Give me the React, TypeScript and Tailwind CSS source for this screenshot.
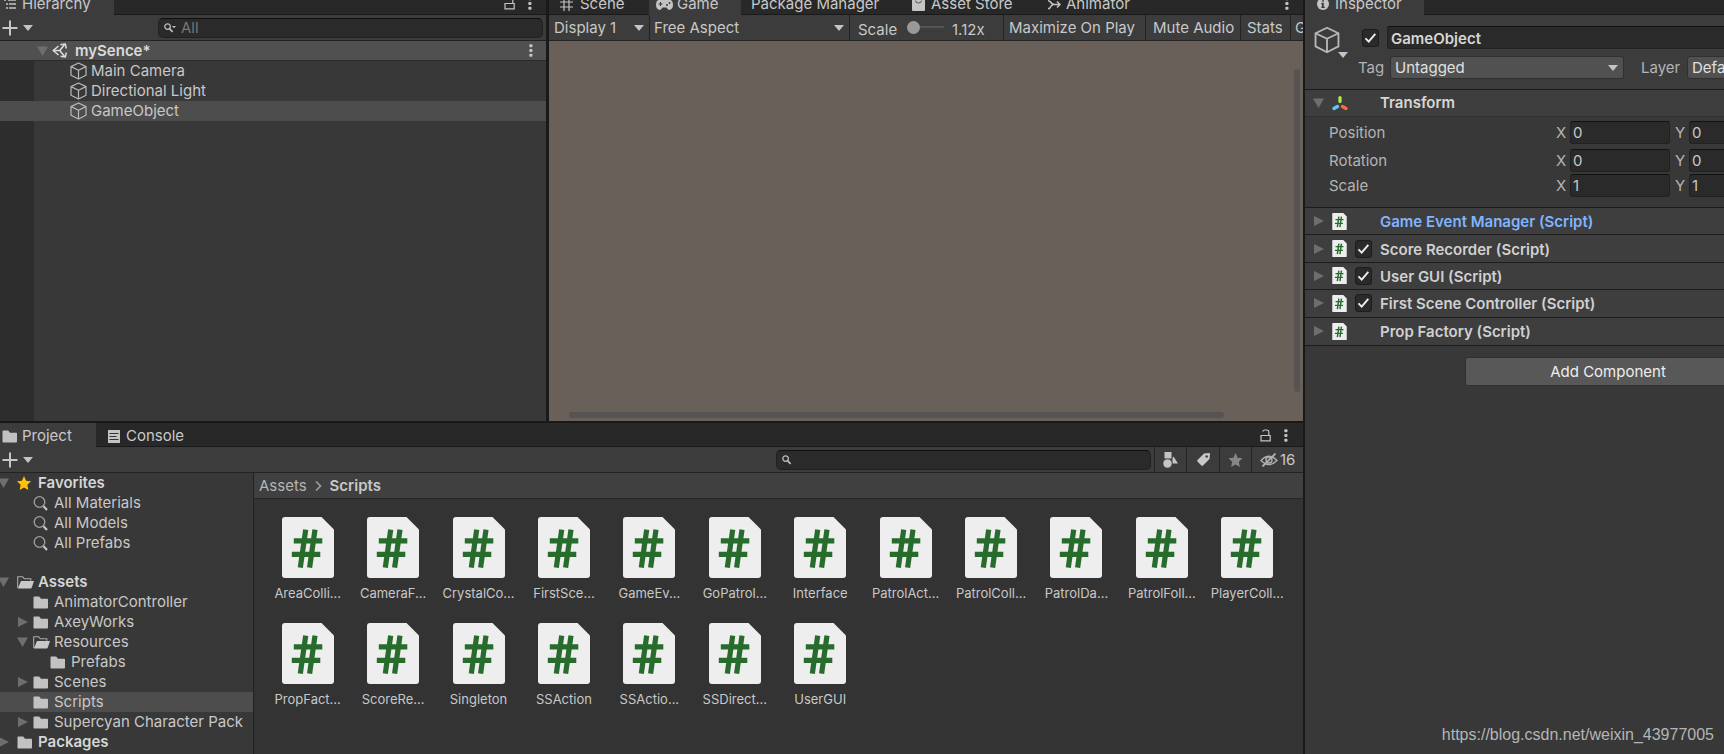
import type { ReactNode } from 'react';

const sceneObjects = [
  { name: 'Main Camera', selected: false },
  { name: 'Directional Light', selected: false },
  { name: 'GameObject', selected: true },
];

const favorites = ['All Materials', 'All Models', 'All Prefabs'];

type Fold = 'open' | 'closed' | 'none';

const folders: { name: string; fold: Fold; depth: number; selected?: boolean }[] = [
  { name: 'Assets', fold: 'open', depth: 0 },
  { name: 'AnimatorController', fold: 'none', depth: 1 },
  { name: 'AxeyWorks', fold: 'closed', depth: 1 },
  { name: 'Resources', fold: 'open', depth: 1 },
  { name: 'Prefabs', fold: 'none', depth: 2 },
  { name: 'Scenes', fold: 'closed', depth: 1 },
  { name: 'Scripts', fold: 'none', depth: 1, selected: true },
  { name: 'Supercyan Character Pack', fold: 'closed', depth: 1 },
  { name: 'Packages', fold: 'closed', depth: 0 },
];

const depthPadding = ['pl-0', 'pl-[17px]', 'pl-[34px]'];

const scripts = [
  'AreaColli...', 'CameraF...', 'CrystalCo...', 'FirstSce...', 'GameEv...', 'GoPatrol...',
  'Interface', 'PatrolAct...', 'PatrolColl...', 'PatrolDa...', 'PatrolFoll...', 'PlayerColl...',
  'PropFact...', 'ScoreRe...', 'Singleton', 'SSAction', 'SSActio...', 'SSDirect...', 'UserGUI',
];

const components = [
  { name: 'Game Event Manager (Script)', toggle: false, highlight: true },
  { name: 'Score Recorder (Script)', toggle: true },
  { name: 'User GUI (Script)', toggle: true },
  { name: 'First Scene Controller (Script)', toggle: true },
  { name: 'Prop Factory (Script)', toggle: false },
];

/* ---------- icons ---------- */

function Caret() {
  return (
    <svg className="h-[6px] w-[10px] shrink-0" viewBox="0 0 10 6" fill="#c4c4c4">
      <path d="M0 0h10L5 6z" />
    </svg>
  );
}

function FoldArrow({ fold }: { fold: Fold }) {
  return (
    <svg className="h-[10px] w-[11px] shrink-0" viewBox="0 0 11 10" fill="#6e6e6e">
      {fold === 'open' && <path d="M0 0.5h11L5.5 10z" />}
      {fold === 'closed' && <path d="M1 0l10 5-10 5z" />}
    </svg>
  );
}

function Plus() {
  return (
    <svg className="h-4 w-4 shrink-0" viewBox="0 0 16 16" stroke="#c8c8c8" strokeWidth="2">
      <path d="M8 0.5v15M0.5 8h15" />
    </svg>
  );
}

function Dots() {
  return (
    <svg className="h-[13px] w-[4px] shrink-0" viewBox="0 0 4 13" fill="#c4c4c4">
      <rect x="0.3" y="0.2" width="3.2" height="3" rx="1" />
      <rect x="0.3" y="5" width="3.2" height="3" rx="1" />
      <rect x="0.3" y="9.8" width="3.2" height="3" rx="1" />
    </svg>
  );
}

function Lock() {
  return (
    <svg className="h-[13px] w-[11px] shrink-0" viewBox="0 0 11 13" fill="none" stroke="#c4c4c4" strokeWidth="1.2">
      <path d="M1 6.5h9.2v5.4H1z" />
      <path d="M8.8 6.5V3.2Q8.8 1 6.5 1H5Q3 1 2.8 2.6" />
    </svg>
  );
}

function Cube({ className }: { className: string }) {
  return (
    <svg className={className} viewBox="0 0 17 18" fill="none" stroke="#b9b9b9" strokeWidth="1.2" strokeLinejoin="round">
      <path d="M8.5 1L16 4.6v8.6L8.5 17 1 13.2V4.6z" />
      <path d="M1 4.6l7.5 3.6L16 4.6M8.5 8.2V17" />
    </svg>
  );
}

function UnityLogo() {
  return (
    <svg className="h-[15px] w-[15px] shrink-0" viewBox="0 0 15 15" fill="none" stroke="#dcdcdc" strokeWidth="1.5" strokeLinejoin="round">
      <path d="M6.500 3L1.200 7.500l5.300 4.500" />
      <path d="M8.500 1.800l4.800-.9 1 4.600M14.300 9.500l-1 4.600-4.800-.9" />
      <path d="M1.200 7.500h6.600l4.600-5.800M7.800 7.500l4.600 5.800" />
    </svg>
  );
}

function Folder() {
  return (
    <svg className="h-[13px] w-[16px] shrink-0" viewBox="0 0 16 13" fill="#c2c2c2">
      <path d="M1 0.5h5.2L8 2.8h6.2q.8 0 .8.8v8q0 .9-.9.9H1.4q-.9 0-.9-.9V1.2z" />
    </svg>
  );
}

function FolderOpen() {
  return (
    <svg className="h-[13px] w-[17px] shrink-0" viewBox="0 0 17 13">
      <path d="M.7 12V.8h5l1.6 2h6.5v2" fill="none" stroke="#a9a9a9" strokeWidth="1.1" />
      <path d="M4 5h13l-2.2 6.6q-.3.9-1.2.9H.8z" fill="#c8c8c8" />
    </svg>
  );
}

function Search() {
  return (
    <svg className="h-[15px] w-[15px] shrink-0" viewBox="0 0 15 15" fill="none">
      <circle cx="6.5" cy="6" r="5.3" stroke="#a0a0a0" strokeWidth="1.3" />
      <path d="M10.5 10.2l3.5 3.8" stroke="#c4c4c4" strokeWidth="2.2" />
    </svg>
  );
}

function SearchSmall({ menu = false }: { menu?: boolean }) {
  return (
    <svg className="h-[10px] w-[12px] shrink-0" viewBox="0 0 12 10" fill="none" stroke="#bdbdbd">
      <circle cx="3.6" cy="3.6" r="2.8" strokeWidth="1.3" />
      <path d="M5.6 5.6l3 3.4" strokeWidth="1.7" />
      {menu && <path d="M8 3h4l-2 2.2z" fill="#bdbdbd" stroke="none" />}
    </svg>
  );
}

function ScriptFile({ className }: { className: string }) {
  return (
    <svg className={className} viewBox="0 0 52 61">
      <path d="M3 0h36.5L52 12.5V58q0 3-3 3H3q-3 0-3-3V3q0-3 3-3z" fill="#eeeeee" />
      <path d="M23.7 12.7l-5.4 38M33 12.7l-5.4 38M11.8 23.8h28.5M9.8 37.3h28.5" stroke="#276c2c" strokeWidth="5.2" />
    </svg>
  );
}

function Check() {
  return (
    <svg className="pointer-events-none h-[18px] w-[17px] [grid-area:1/1]" viewBox="0 0 17 18" fill="none" stroke="#eeeeee" strokeWidth="1.9">
      <path d="M3.5 9.4l3.2 3.3 6.6-7.8" />
    </svg>
  );
}

/* ---------- controls ---------- */

function Toggle({ label }: { label: string }) {
  return (
    <label className="grid shrink-0">
      <input
        type="checkbox"
        defaultChecked
        aria-label={label}
        className="h-[18px] w-[17px] appearance-none rounded-[3px] border border-[#1c1c1c] bg-[#2a2a2a] [grid-area:1/1]"
      />
      <Check />
    </label>
  );
}

function Tab({ icon, label, active = false, className }: { icon?: ReactNode; label: string; active?: boolean; className: string }) {
  return (
    <button
      className={`flex h-6 shrink-0 items-center pt-[2px] text-left ${active ? 'bg-[#3c3c3c]' : ''} ${className}`}
    >
      {icon}
      {label}
    </button>
  );
}

function AxisField({ axis, row, value }: { axis: string; row: string; value: string }) {
  return (
    <label className="flex shrink-0 items-center">
      <span className="w-[14px] text-[#b4b4b4]">{axis}</span>
      <input
        aria-label={`${row} ${axis}`}
        defaultValue={value}
        className="h-[23px] w-[100px] rounded-[3px] border border-[#212121] border-t-[#111111] bg-[#2a2a2a] px-[2px]"
      />
    </label>
  );
}

function TransformRow({ name, value }: { name: string; value: string }) {
  return (
    <div className="flex items-center">
      <span className="w-[227px] shrink-0 text-[#b4b4b4]">{name}</span>
      <div className="flex gap-[5px]">
        <AxisField axis="X" row={name} value={value} />
        <AxisField axis="Y" row={name} value={value} />
      </div>
    </div>
  );
}

/* ---------- panels ---------- */

function HierarchyPanel() {
  return (
    <section className="flex w-[546px] shrink-0 flex-col bg-[#383838]">
      <div className="flex h-[15px] items-end justify-between overflow-hidden bg-[#282828] shadow-[inset_0_-1px_0_#1a1a1a]">
        <Tab
          active
          className="w-[114px] gap-[6px] pl-1"
          label="Hierarchy"
          icon={
            <svg className="h-[12px] w-[12px]" viewBox="0 0 12 12" stroke="#c4c4c4" strokeWidth="1.3">
              <path d="M0 2h2M4 2h8M2 6h2M5 6h7M2 10h2M5 10h7" />
            </svg>
          }
        />
        <div className="flex h-6 items-center gap-[13px] pr-[14px]">
          <Lock />
          <Dots />
        </div>
      </div>
      <div className="flex h-[26px] items-center border-b border-[#222222] bg-[#3c3c3c] pr-[3px] pl-[2px]">
        <button className="flex items-center gap-[5px]" aria-label="Create">
          <Plus />
          <Caret />
        </button>
        <label className="ml-auto flex h-5 w-[385px] items-center gap-[5px] rounded-[5px] border border-[#212121] border-t-[#0f0f0f] bg-[#2a2a2a] px-[5px]">
          <SearchSmall menu />
          <input placeholder="All" aria-label="Search hierarchy" className="min-w-0 flex-1 outline-none placeholder:text-[#767676]" />
        </label>
      </div>
      <div className="flex h-5 items-center border-b border-[#2b2b2b] bg-[#505050] pr-[13px] pl-[37px]">
        <FoldArrow fold="open" />
        <span className="mr-2 ml-1">
          <UnityLogo />
        </span>
        <span className="font-semibold text-[#dadada]">mySence*</span>
        <span className="ml-auto">
          <Dots />
        </span>
      </div>
      <ul className="flex-1 bg-linear-to-r from-[#2d2d2d] from-[34px] to-[#383838] to-[34px]">
        {sceneObjects.map((object) => (
          <li key={object.name} className={`flex h-5 items-center gap-1 pl-[70px] ${object.selected ? 'bg-[#4d4d4d]' : ''}`}>
            <Cube className="h-[18px] w-[17px] shrink-0" />
            {object.name}
          </li>
        ))}
      </ul>
    </section>
  );
}

function GamePanel() {
  return (
    <section className="flex min-w-0 flex-1 flex-col">
      <div className="flex h-[15px] items-end overflow-hidden bg-[#282828] shadow-[inset_0_-1px_0_#1a1a1a]">
        <Tab
          className="w-[100px] gap-[7px] pl-[11px]"
          label="Scene"
          icon={
            <svg className="h-[13px] w-[13px]" viewBox="0 0 13 13" stroke="#c4c4c4" strokeWidth="1.2">
              <path d="M4 0v13M9 0v13M0 4h13M0 9h13" />
            </svg>
          }
        />
        <Tab
          active
          className="w-[92px] gap-1 pl-[7px]"
          label="Game"
          icon={
            <svg className="h-[11px] w-[17px]" viewBox="0 0 17 11">
              <path d="M4.5 0h8Q17 1 17 5.5T13.5 11q-1.5 0-3-2.5h-4Q5 11 3.5 11 0 10 0 5.500T4.500 0z" fill="#c4c4c4" />
              <path d="M2.500 5h4M4.500 3v4" stroke="#3c3c3c" strokeWidth="1.200" />
              <circle cx="11" cy="6" r="1" fill="#3c3c3c" />
              <circle cx="13.500" cy="4" r="1" fill="#3c3c3c" />
            </svg>
          }
        />
        <Tab className="w-[160px] pl-[10px]" label="Package Manager" />
        <Tab
          className="w-[135px] gap-[6px] pl-[11px]"
          label="Asset Store"
          icon={
            <svg className="h-[13px] w-[13px]" viewBox="0 0 13 13">
              <path d="M0 1h13v11q0 1-1 1H1q-1 0-1-1z" fill="#c4c4c4" />
              <path d="M3.500 2.500q0 2.500 3 2.500t3-2.500" stroke="#555" fill="none" />
            </svg>
          }
        />
        <Tab
          className="gap-[5px] pl-[12px]"
          label="Animator"
          icon={
            <svg className="h-[11px] w-[13px]" viewBox="0 0 13 11" fill="none" stroke="#c4c4c4" strokeWidth="1.500">
              <path d="M0 1.500l2 1Q3.500 5 6 5.500h6M0 9.500h1.500Q3 6.500 5 5.500M9 2.500l3 3-3 3" />
            </svg>
          }
        />
        <div className="ml-auto flex h-6 items-center pr-[14px]">
          <Dots />
        </div>
      </div>
      <div className="flex h-[26px] items-stretch divide-x divide-[#232323] overflow-hidden border-b border-[#232323] bg-[#3c3c3c] whitespace-nowrap">
        <div className="grid w-[101px] shrink-0 items-center">
          <select aria-label="Display" className="appearance-none pl-[5px] [grid-area:1/1]">
            <option>Display 1</option>
          </select>
          <span className="pointer-events-none justify-self-end pr-[5px] [grid-area:1/1]">
            <Caret />
          </span>
        </div>
        <div className="grid w-[200px] shrink-0 items-center">
          <select aria-label="Aspect" className="appearance-none pl-1 [grid-area:1/1]">
            <option>Free Aspect</option>
          </select>
          <span className="pointer-events-none justify-self-end pr-[5px] [grid-area:1/1]">
            <Caret />
          </span>
        </div>
        <label className="flex w-[154px] shrink-0 items-center pt-1 pl-2">
          <span className="w-[49px]">Scale</span>
          <input
            type="range"
            defaultValue={0}
            className="mb-1 h-[13px] w-[37px] appearance-none bg-linear-to-b from-transparent from-[5px] via-[#5e5e5e] via-[5px] to-transparent to-[8px] [&::-webkit-slider-thumb]:h-[13px] [&::-webkit-slider-thumb]:w-[13px] [&::-webkit-slider-thumb]:appearance-none [&::-webkit-slider-thumb]:rounded-full [&::-webkit-slider-thumb]:bg-[#999999]"
          />
          <span className="ml-2">1.12x</span>
        </label>
        <button className="w-[142px] shrink-0 pl-[5px] text-left">Maximize On Play</button>
        <button className="w-[95px] shrink-0 pl-[7px] text-left">Mute Audio</button>
        <button className="w-[50px] shrink-0 pl-[6px] text-left">Stats</button>
        <button className="shrink-0 pl-1">Gizmos</button>
      </div>
      <div className="flex flex-1 flex-col bg-[#69605a]">
        <div className="flex flex-1 justify-end pt-[28px] pr-[3px] pb-5">
          <div className="w-[6px] rounded-full bg-[#565352]" />
        </div>
        <div className="mr-[79px] mb-[3px] ml-5 h-[6px] rounded-full bg-[#565352]" />
      </div>
    </section>
  );
}

function FolderTree() {
  return (
    <nav className="w-[254px] shrink-0 overflow-hidden border-r border-[#222222] bg-[#383838] whitespace-nowrap">
      <ul>
        <li className="flex h-5 items-center font-semibold text-[#d6d6d6]">
          <span className="-ml-[2px]">
            <FoldArrow fold="open" />
          </span>
          <svg className="mr-[7px] ml-2 h-[14px] w-[14px]" viewBox="0 0 14 14" fill="#ffc107">
            <path d="M7 0l2.100 4.700 4.900.6-3.600 3.500.9 5.200L7 11.500 2.700 14l.9-5.200L0 5.300l4.900-.6z" />
          </svg>
          Favorites
        </li>
        {favorites.map((name) => (
          <li key={name} className="flex h-5 items-center gap-[6px] pl-[33px]">
            <Search />
            {name}
          </li>
        ))}
      </ul>
      <ul className="pt-[19px]">
        {folders.map((folder) => (
          <li
            key={folder.name}
            className={`flex h-5 items-center ${depthPadding[folder.depth]} ${folder.selected ? 'bg-[#4d4d4d]' : ''} ${
              folder.depth === 0 ? 'font-semibold text-[#d6d6d6]' : ''
            }`}
          >
            <span className={folder.depth === 0 ? '-ml-[2px]' : ''}>
              <FoldArrow fold={folder.fold} />
            </span>
            <span className={`flex w-[21px] ${folder.depth === 0 ? 'ml-[8px]' : 'ml-[5px]'}`}>
              {folder.fold === 'open' ? <FolderOpen /> : <Folder />}
            </span>
            {folder.name}
          </li>
        ))}
      </ul>
    </nav>
  );
}

function ProjectPanel() {
  return (
    <section className="flex flex-1 flex-col border-t-2 border-[#191919]">
      <div className="flex h-6 items-end bg-[#282828] shadow-[inset_0_-1px_0_#1a1a1a]">
        <Tab active className="w-24 gap-1 pl-[2px]" label="Project" icon={<Folder />} />
        <Tab
          className="gap-[6px] pl-3"
          label="Console"
          icon={
            <svg className="h-[13px] w-[12px]" viewBox="0 0 12 13">
              <path d="M0 0h12v13H0z" fill="#c4c4c4" />
              <path d="M1.500 3.500h9M1.500 6.500h7M1.500 9.500h9" stroke="#333" strokeWidth="1.200" />
            </svg>
          }
        />
        <div className="ml-auto flex h-6 items-center gap-[13px] pr-[15px]">
          <Lock />
          <Dots />
        </div>
      </div>
      <div className="flex h-[26px] items-center border-b border-[#222222] bg-[#3c3c3c] pl-[2px]">
        <button className="flex items-center gap-[5px]" aria-label="Create asset">
          <Plus />
          <Caret />
        </button>
        <label className="mr-[3px] ml-auto flex h-5 w-[375px] items-center gap-1 rounded-[5px] border border-[#212121] border-t-[#0f0f0f] bg-[#2a2a2a] px-[5px]">
          <SearchSmall />
          <input aria-label="Search project" className="min-w-0 flex-1 outline-none" />
        </label>
        <div className="flex h-full items-stretch divide-x divide-[#232323] border-l border-[#232323]">
          <button className="grid w-8 place-items-center" aria-label="Filter by type">
            <svg className="h-4 w-[15px]" viewBox="0 0 15 16" fill="#c4c4c4">
              <path d="M1.500 0h7v6.500h-7zM10.500 4.500l4.500 7H9.500V6z" />
              <circle cx="4.500" cy="11.500" r="4.500" stroke="#3c3c3c" strokeWidth="0.500" />
            </svg>
          </button>
          <button className="grid w-[33px] place-items-center" aria-label="Filter by label">
            <svg className="h-[13px] w-[13px]" viewBox="0 0 13 13">
              <path d="M7 0.500L12 0q1 0 1 1l-.5 5L6 12.500q-.8.8-1.600 0L.5 8.600q-.8-.8 0-1.600z" fill="#c8c8c8" />
              <circle cx="9.700" cy="3.500" r="1.200" fill="#3c3c3c" />
            </svg>
          </button>
          <button className="grid w-8 place-items-center" aria-label="Favorite search">
            <svg className="h-[14px] w-[15px]" viewBox="0 0 14 14" fill="#868686">
              <path d="M7 0l2.100 4.700 4.900.6-3.600 3.500.9 5.200L7 11.500 2.700 14l.9-5.200L0 5.300l4.900-.6z" />
            </svg>
          </button>
          <button className="flex w-[51px] items-center gap-[2px] pl-2">
            <svg className="h-[14px] w-[18px] shrink-0" viewBox="0 0 18 14" fill="none" stroke="#b0b0b0" strokeWidth="1.400">
              <path d="M1 7.500Q9-1 17 7.500 9 15.500 1 7.500z" />
              <circle cx="9" cy="7" r="3" />
              <path d="M2.500 13.500L15.500.5" strokeWidth="1.800" />
            </svg>
            16
          </button>
        </div>
      </div>
      <div className="flex flex-1">
        <FolderTree />
        <div className="min-w-0 flex-1 bg-[#333333]">
          <div className="flex h-[26px] items-center border-b border-[#252525] bg-[#404040] pl-[5px]">
            <a href="#assets" className="text-[#b4b4b4]">Assets</a>
            <svg className="mx-2 h-[10px] w-[7px]" viewBox="0 0 7 10" fill="none" stroke="#9a9a9a" strokeWidth="1.700">
              <path d="M1 0.500L5.500 5 1 9.500" />
            </svg>
            <span className="font-semibold">Scripts</span>
          </div>
          <div className="grid grid-cols-12 gap-y-[22px] pt-[18px] pr-[13px] pl-[11px]">
            {scripts.map((name) => (
              <figure key={name} className="flex flex-col items-center gap-[7px] whitespace-nowrap">
                <ScriptFile className="h-[61px] w-[52px] shrink-0" />
                <figcaption className="text-[13px] leading-4">{name}</figcaption>
              </figure>
            ))}
          </div>
        </div>
      </div>
    </section>
  );
}

function InspectorPanel() {
  return (
    <aside className="flex w-[421px] shrink-0 flex-col overflow-hidden border-l-2 border-[#191919] bg-[#383838] whitespace-nowrap">
      <div className="flex h-[15px] shrink-0 items-end overflow-hidden bg-[#282828] shadow-[inset_0_-1px_0_#1a1a1a]">
        <Tab
          active
          className="w-[119px] gap-[6px] pl-3"
          label="Inspector"
          icon={
            <svg className="h-[12px] w-[12px]" viewBox="0 0 12 12">
              <circle cx="6" cy="6" r="6" fill="#c4c4c4" />
              <path d="M6 2v1.800M4.500 5.500H6v4M4.300 9.300h3.400" stroke="#3c3c3c" strokeWidth="1.500" />
            </svg>
          }
        />
      </div>
      <div className="flex h-[75px] shrink-0 border-b border-[#1a1a1a] bg-[#3c3c3c] pt-[11px] pl-[9px]">
        <button className="flex w-12 shrink-0 items-end self-start" aria-label="Object icon">
          <Cube className="h-[28px] w-[26px]" />
          <span className="-mr-2 -mb-1 -ml-[2px]">
            <Caret />
          </span>
        </button>
        <div className="flex flex-col gap-[7px]">
          <div className="flex items-center gap-2">
            <Toggle label="Active" />
            <input
              aria-label="Name"
              defaultValue="GameObject"
              className="h-[23px] w-[400px] rounded-[3px] border border-[#212121] border-t-[#111111] bg-[#2a2a2a] px-[3px] pt-px font-semibold text-[#d6d6d6]"
            />
          </div>
          <div className="-ml-1 flex items-center">
            <label htmlFor="tag" className="w-8 text-[#b4b4b4]">Tag</label>
            <span className="grid items-center">
              <select id="tag" className="h-[23px] w-[234px] appearance-none rounded-[3px] border border-[#303030] bg-[#515151] px-1 text-[#e0e0e0] [grid-area:1/1]">
                <option>Untagged</option>
              </select>
              <span className="pointer-events-none justify-self-end pr-[6px] [grid-area:1/1]">
                <Caret />
              </span>
            </span>
            <label htmlFor="layer" className="w-[63px] pl-[17px] text-[#b4b4b4]">Layer</label>
            <select id="layer" className="h-[23px] w-[140px] shrink-0 appearance-none rounded-[3px] border border-[#303030] bg-[#515151] px-1 text-[#e0e0e0]">
              <option>Default</option>
            </select>
          </div>
        </div>
      </div>
      <div className="flex h-[27px] shrink-0 items-center border-b border-[#303030] bg-[#3e3e3e] pl-2">
        <FoldArrow fold="open" />
        <svg className="mr-8 ml-2 h-4 w-4" viewBox="0 0 16 16" fill="none" strokeWidth="3.200" strokeLinecap="round">
          <path d="M8 2.500v4" stroke="#a8f04a" />
          <path d="M5.500 11.500L2 13.500" stroke="#6cc4f5" />
          <path d="M10.500 11.500l3.500 2" stroke="#ff6a3c" />
        </svg>
        <h2 className="font-semibold text-[#d6d6d6]">Transform</h2>
      </div>
      <div className="flex h-[90px] shrink-0 flex-col pt-1 pl-[24px]">
        <TransformRow name="Position" value="0" />
        <div className="pt-[5px] pb-[2px]">
          <TransformRow name="Rotation" value="0" />
        </div>
        <TransformRow name="Scale" value="1" />
      </div>
      <ul className="grid h-[139px] shrink-0 auto-rows-fr divide-y divide-[#1c1c1c] border-y border-[#1c1c1c] bg-[#3e3e3e]">
        {components.map((component) => (
          <li key={component.name} className="flex items-center pl-2">
            <FoldArrow fold="closed" />
            <ScriptFile className="ml-2 h-[17px] w-[15px] shrink-0" />
            <span className="ml-2 w-[25px]">{component.toggle && <Toggle label={component.name} />}</span>
            <span className={`pt-[2px] font-semibold ${component.highlight ? 'text-[#81b4ff]' : 'text-[#d0d0d0]'}`}>{component.name}</span>
          </li>
        ))}
      </ul>
      <button className="mt-[11px] ml-[160px] h-[29px] w-[286px] shrink-0 rounded-[3px] border border-[#303030] bg-[#585858] text-[#eeeeee]">
        Add Component
      </button>
      <p className="mt-auto pr-[10px] pb-[9px] text-right font-['Liberation_Sans',sans-serif] text-[16px] leading-5 text-[#b5b5b5]">
        https://blog.csdn.net/weixin_43977005
      </p>
    </aside>
  );
}

export default function App() {
  return (
    <div className="flex min-h-screen overflow-hidden bg-[#191919] font-['Inter',sans-serif] text-[15px] leading-5 text-[#c8c8c8]">
      <main className="flex min-w-0 flex-1 flex-col">
        <div className="flex h-[421px] gap-[3px]">
          <HierarchyPanel />
          <GamePanel />
        </div>
        <ProjectPanel />
      </main>
      <InspectorPanel />
    </div>
  );
}
